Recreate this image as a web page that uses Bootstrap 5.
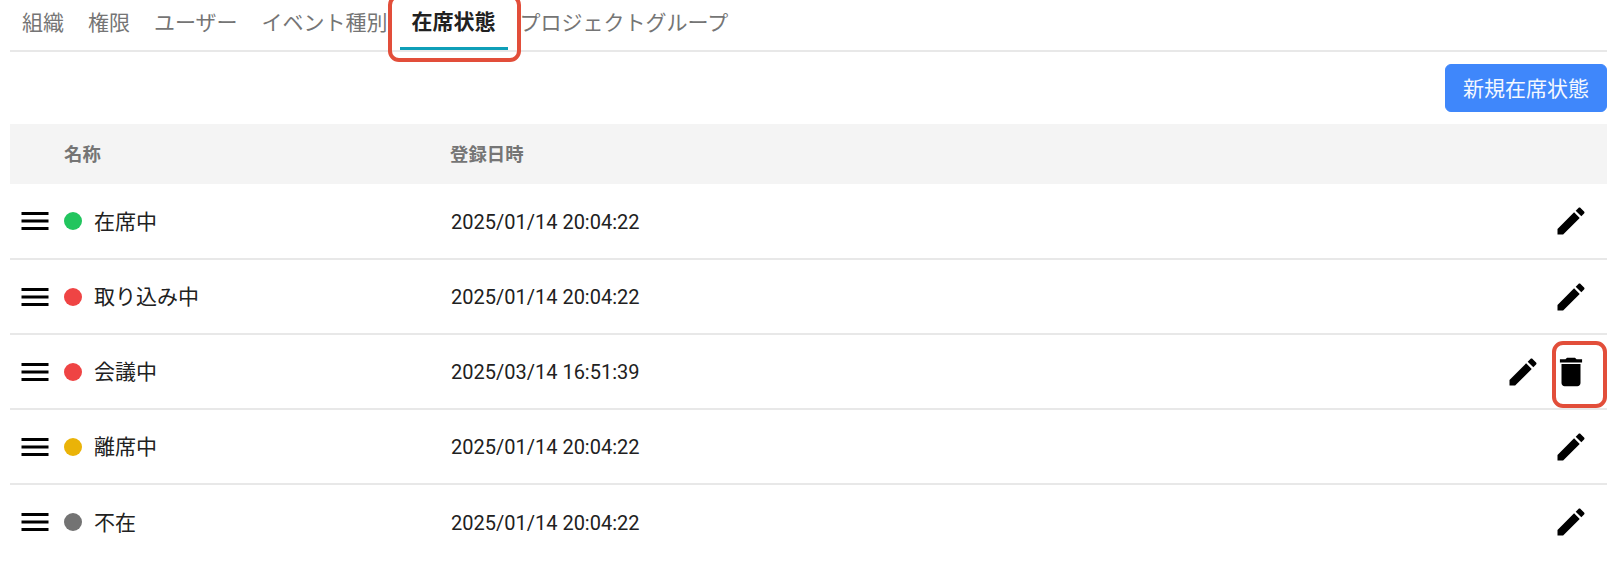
<!DOCTYPE html>
<html lang="ja">
<head>
  <meta charset="UTF-8">
  <meta name="viewport" content="width=device-width, initial-scale=1.0">
  <title>在席状態</title>
  <link href="https://cdn.jsdelivr.net/npm/bootstrap@5.3.3/dist/css/bootstrap.min.css" rel="stylesheet">
  <script src="https://cdn.jsdelivr.net/npm/bootstrap@5.3.3/dist/js/bootstrap.bundle.min.js"></script>
  <style>
    body {
      font-family: "Noto Sans CJK JP", Roboto, sans-serif;
      font-size: 21px;
      color: #212121;
      background: #fff;
      overflow: hidden;
    }
    .page-wrap { padding: 0 12px 0 10px; }

    /* タブ */
    .tab-bar { height: 52px; border-bottom: 2px solid #e8e8e8; flex-wrap: nowrap; }
    .tab-bar .nav-link {
      height: 50px;
      padding: 0 12px;
      font-size: 21px;
      line-height: 43px;
      color: #757575;
      white-space: nowrap;
    }
    .tab-bar .nav-link.active {
      color: #212121;
      font-weight: 700;
      border-bottom: 3px solid #0e9fb8;
      line-height: 41px;
    }
    .mark-box {
      position: absolute;
      border: 4px solid #e24e3a;
      border-radius: 11px;
      pointer-events: none;
    }
    .mark-tab { left: -12px; right: -13px; top: -6px; bottom: -12px; }
    .mark-trash { left: 0; right: -17px; top: -12px; bottom: -17px; }

    /* 新規ボタン */
    .add-row { padding: 12px 0; }
    .add-btn {
      width: 162px;
      height: 48px;
      padding: 0;
      font-size: 21px;
      color: #f4f8ff;
      background: #3f87fb;
      border-color: #3f87fb;
      border-radius: 6px;
    }

    /* 一覧 */
    .status-table { table-layout: fixed; margin: 0; }
    .status-table th {
      height: 60px;
      padding: 0;
      font-size: 18.4px;
      font-weight: 700;
      color: #757575;
      background: #f4f4f4;
      border: 0;
      vertical-align: middle;
    }
    .status-table td {
      height: 75px;
      padding: 0;
      color: #212121;
      border-bottom: 2px solid #e8e8e8;
      vertical-align: middle;
    }
    .status-table tr:last-child td { border-bottom: 0; }
    .col-name { width: 440px; }
    .col-ops { width: 200px; }
    .name-cell { padding-left: 11px !important; }
    .th-name { padding-left: 54px !important; }
    .date-text { font-family: Roboto, sans-serif; font-size: 20px; padding-left: 1px !important; padding-top: 1px !important; }
    .status-name { margin-left: 12px; margin-bottom: 1px; }
    .status-dot { width: 18px; height: 18px; border-radius: 50%; flex-shrink: 0; }
    .dot-green { background: #22c55e; }
    .dot-red { background: #ef4444; }
    .dot-yellow { background: #eab308; }
    .dot-gray { background: #737373; }
    .drag-icon { width: 36px; height: 36px; flex-shrink: 0; margin-right: 11px; margin-left: -4px; }
    .op-icon { width: 36px; height: 36px; display: block; margin: 1px; }
    .trash-icon { width: 38px; height: 38px; margin: 0; }
    .ops-cell { padding-right: 17px !important; }
    .op-wrap { position: relative; width: 38px; height: 38px; margin-left: 10px; }
  </style>
</head>
<body>
  <!-- 図形の定義 -->
  <svg width="0" height="0" class="position-absolute">
    <symbol id="ic-menu" viewBox="0 0 24 24"><path d="M3 18h18v-2H3v2zm0-5h18v-2H3v2zm0-7v2h18V6H3z"/></symbol>
    <symbol id="ic-edit" viewBox="0 0 24 24"><path d="M3 17.25V21h3.75L17.81 9.94l-3.75-3.75L3 17.25zM20.71 7.04c.39-.39.39-1.02 0-1.41l-2.34-2.34c-.39-.39-1.02-.39-1.41 0l-1.83 1.83 3.75 3.75 1.83-1.83z"/></symbol>
    <symbol id="ic-trash" viewBox="0 0 24 24"><path d="M6 19c0 1.1.9 2 2 2h8c1.1 0 2-.9 2-2V7H6v12zM19 4h-3.5l-1-1h-5l-1 1H5v2h14V4z"/></symbol>
  </svg>

  <div class="page-wrap">
    <ul class="nav tab-bar">
      <li class="nav-item"><a class="nav-link" href="#">組織</a></li>
      <li class="nav-item"><a class="nav-link" href="#">権限</a></li>
      <li class="nav-item"><a class="nav-link" href="#">ユーザー</a></li>
      <li class="nav-item"><a class="nav-link" href="#">イベント種別</a></li>
      <li class="nav-item position-relative">
        <a class="nav-link active" href="#">在席状態</a>
        <span class="mark-box mark-tab"></span>
      </li>
      <li class="nav-item"><a class="nav-link" href="#">プロジェクトグループ</a></li>
    </ul>

    <div class="add-row d-flex justify-content-end">
      <button type="button" class="btn add-btn">新規在席状態</button>
    </div>

    <table class="table status-table">
      <thead>
        <tr>
          <th class="col-name th-name">名称</th>
          <th>登録日時</th>
          <th class="col-ops"></th>
        </tr>
      </thead>
      <tbody>
        <tr>
          <td class="name-cell"><div class="d-flex align-items-center"><svg class="drag-icon"><use href="#ic-menu"/></svg><span class="status-dot dot-green"></span><span class="status-name">在席中</span></div></td>
          <td class="date-text">2025/01/14 20:04:22</td>
          <td class="ops-cell"><div class="d-flex justify-content-end"><div class="op-wrap"><svg class="op-icon"><use href="#ic-edit"/></svg></div></div></td>
        </tr>
        <tr>
          <td class="name-cell"><div class="d-flex align-items-center"><svg class="drag-icon"><use href="#ic-menu"/></svg><span class="status-dot dot-red"></span><span class="status-name">取り込み中</span></div></td>
          <td class="date-text">2025/01/14 20:04:22</td>
          <td class="ops-cell"><div class="d-flex justify-content-end"><div class="op-wrap"><svg class="op-icon"><use href="#ic-edit"/></svg></div></div></td>
        </tr>
        <tr>
          <td class="name-cell"><div class="d-flex align-items-center"><svg class="drag-icon"><use href="#ic-menu"/></svg><span class="status-dot dot-red"></span><span class="status-name">会議中</span></div></td>
          <td class="date-text">2025/03/14 16:51:39</td>
          <td class="ops-cell"><div class="d-flex justify-content-end">
            <div class="op-wrap"><svg class="op-icon"><use href="#ic-edit"/></svg></div>
            <div class="op-wrap"><svg class="op-icon trash-icon"><use href="#ic-trash"/></svg><span class="mark-box mark-trash"></span></div>
          </div></td>
        </tr>
        <tr>
          <td class="name-cell"><div class="d-flex align-items-center"><svg class="drag-icon"><use href="#ic-menu"/></svg><span class="status-dot dot-yellow"></span><span class="status-name">離席中</span></div></td>
          <td class="date-text">2025/01/14 20:04:22</td>
          <td class="ops-cell"><div class="d-flex justify-content-end"><div class="op-wrap"><svg class="op-icon"><use href="#ic-edit"/></svg></div></div></td>
        </tr>
        <tr>
          <td class="name-cell"><div class="d-flex align-items-center"><svg class="drag-icon"><use href="#ic-menu"/></svg><span class="status-dot dot-gray"></span><span class="status-name">不在</span></div></td>
          <td class="date-text">2025/01/14 20:04:22</td>
          <td class="ops-cell"><div class="d-flex justify-content-end"><div class="op-wrap"><svg class="op-icon"><use href="#ic-edit"/></svg></div></div></td>
        </tr>
      </tbody>
    </table>
  </div>
</body>
</html>
